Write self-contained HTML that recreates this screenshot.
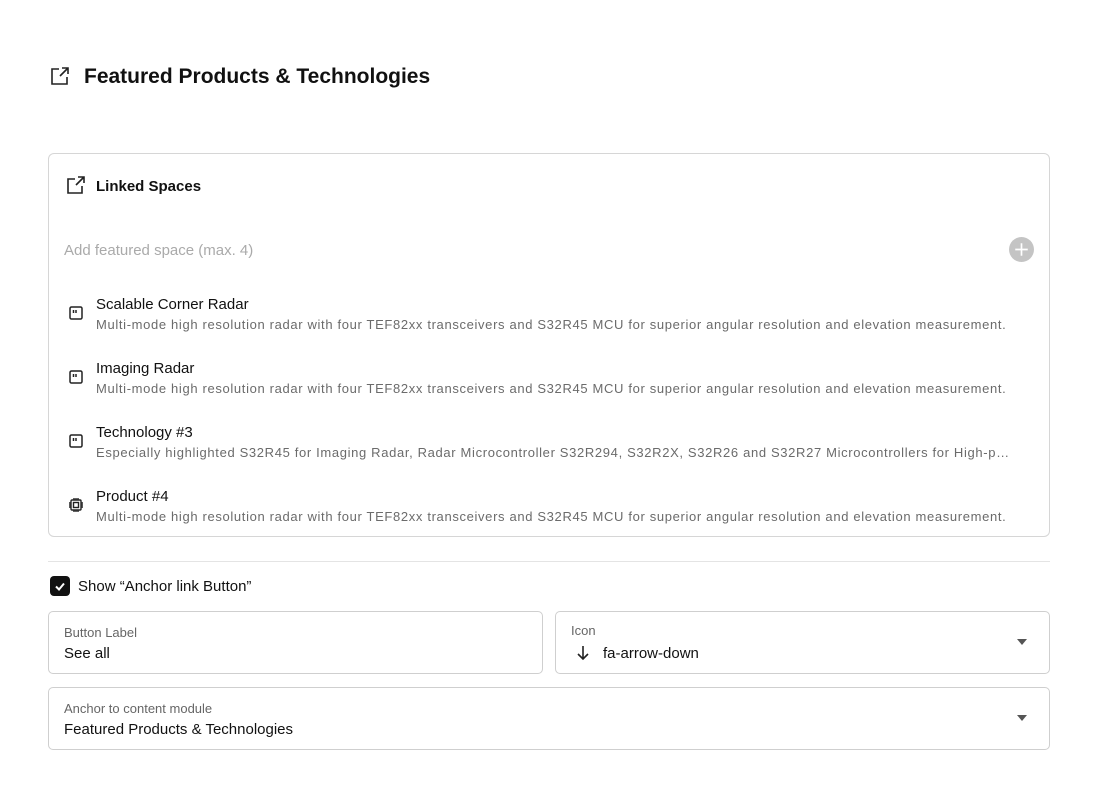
<!DOCTYPE html>
<html><head><style>
*{box-sizing:border-box;margin:0;padding:0}
body{width:1098px;height:798px;background:#fff;font-family:"Liberation Sans",sans-serif;color:#111;position:relative;overflow:hidden}
.abs{position:absolute}
h1{position:absolute;left:84px;top:65px;font-size:21px;font-weight:bold;white-space:nowrap}
.card{position:absolute;left:48px;top:153px;width:1002px;height:384px;border:1px solid #d6d6d6;border-radius:6px}
.t{position:absolute;font-size:15px;white-space:nowrap}
.d{position:absolute;font-size:13px;color:#6b6b6b;white-space:nowrap;width:914px;overflow:hidden;text-overflow:ellipsis;letter-spacing:0.65px}
.box{position:absolute;border:1px solid #cfcfcf;border-radius:5px}
.lbl{position:absolute;font-size:13px;color:#666}
.val{position:absolute;font-size:15px;color:#111}
.caret{position:absolute;width:0;height:0;border-left:5px solid transparent;border-right:5px solid transparent;border-top:6px solid #555}
</style></head><body>
<svg class="abs" style="left:50px;top:66px" width="20" height="20" viewBox="0 0 20 20" fill="none" stroke="#222" stroke-width="1.6"><path d="M9 3H2v15h15v-7"/><path d="M12 2h6v6M18 2l-8 8"/></svg>
<h1>Featured Products &amp; Technologies</h1>
<div class="card"></div>
<svg class="abs" style="left:66px;top:175px" width="20" height="20" viewBox="0 0 20 20" fill="none" stroke="#222" stroke-width="1.6"><path d="M9 4H2v14h14v-7"/><path d="M12 2h6v6M18 2l-8 8"/></svg>
<div class="t" style="left:96px;top:178px;font-weight:bold">Linked Spaces</div>
<div class="t" style="left:64px;top:242px;color:#aaa">Add featured space (max. 4)</div>
<svg class="abs" style="left:1009px;top:237px" width="25" height="25" viewBox="0 0 24 24"><circle cx="12" cy="12" r="12" fill="#c4c4c4"/><path d="M12 6v12M6 12h12" stroke="#fff" stroke-width="1.6"/></svg>

<svg class="abs" style="left:69px;top:306px" width="14" height="14" viewBox="0 0 14 14" fill="none" stroke="#222" stroke-width="1.5"><rect x="1" y="1" width="12" height="12" rx="1.5"/><path d="M4.5 4v3M7 4v3"/></svg>
<div class="t" style="left:96px;top:296px">Scalable Corner Radar</div>
<div class="d" style="left:96px;top:317px">Multi-mode high resolution radar with four TEF82xx transceivers and S32R45 MCU for superior angular resolution and elevation measurement.</div>

<svg class="abs" style="left:69px;top:370px" width="14" height="14" viewBox="0 0 14 14" fill="none" stroke="#222" stroke-width="1.5"><rect x="1" y="1" width="12" height="12" rx="1.5"/><path d="M4.5 4v3M7 4v3"/></svg>
<div class="t" style="left:96px;top:360px">Imaging Radar</div>
<div class="d" style="left:96px;top:381px">Multi-mode high resolution radar with four TEF82xx transceivers and S32R45 MCU for superior angular resolution and elevation measurement.</div>

<svg class="abs" style="left:69px;top:434px" width="14" height="14" viewBox="0 0 14 14" fill="none" stroke="#222" stroke-width="1.5"><rect x="1" y="1" width="12" height="12" rx="1.5"/><path d="M4.5 4v3M7 4v3"/></svg>
<div class="t" style="left:96px;top:424px">Technology #3</div>
<div class="d" style="left:96px;top:445px">Especially highlighted S32R45 for Imaging Radar, Radar Microcontroller S32R294, S32R2X, S32R26 and S32R27 Microcontrollers for High-performance radar applications</div>

<svg class="abs" style="left:68px;top:497px" width="16" height="16" viewBox="0 0 16 16" fill="none" stroke="#222" stroke-width="1.4"><rect x="3" y="3" width="10" height="10" rx="1"/><rect x="5.5" y="5.5" width="5" height="5"/><path d="M6 1v2M8 1v2M10 1v2M6 13v2M8 13v2M10 13v2M1 6h2M1 8h2M1 10h2M13 6h2M13 8h2M13 10h2"/></svg>
<div class="t" style="left:96px;top:488px">Product #4</div>
<div class="d" style="left:96px;top:509px">Multi-mode high resolution radar with four TEF82xx transceivers and S32R45 MCU for superior angular resolution and elevation measurement.</div>

<div class="abs" style="left:48px;top:561px;width:1002px;height:1px;background:#e4e4e4"></div>
<div class="abs" style="left:50px;top:576px;width:20px;height:20px;background:#111;border-radius:4px"></div>
<svg class="abs" style="left:50px;top:576px" width="20" height="20" viewBox="0 0 20 20"><path d="M6 10.5l3 3 5-6" stroke="#fff" stroke-width="2" fill="none"/></svg>
<div class="t" style="left:78px;top:578px">Show “Anchor link Button”</div>

<div class="box" style="left:48px;top:611px;width:495px;height:63px"></div>
<div class="lbl" style="left:64px;top:625px">Button Label</div>
<div class="val" style="left:64px;top:645px">See all</div>

<div class="box" style="left:555px;top:611px;width:495px;height:63px"></div>
<div class="lbl" style="left:571px;top:623px">Icon</div>
<svg class="abs" style="left:575px;top:645px" width="16" height="16" viewBox="0 0 16 16" fill="none" stroke="#222" stroke-width="1.6"><path d="M8 1v13M3 9l5 5 5-5"/></svg>
<div class="val" style="left:603px;top:645px">fa-arrow-down</div>
<div class="caret" style="left:1017px;top:639px"></div>

<div class="box" style="left:48px;top:687px;width:1002px;height:63px"></div>
<div class="lbl" style="left:64px;top:701px">Anchor to content module</div>
<div class="val" style="left:64px;top:721px">Featured Products &amp; Technologies</div>
<div class="caret" style="left:1017px;top:715px"></div>
</body></html>
